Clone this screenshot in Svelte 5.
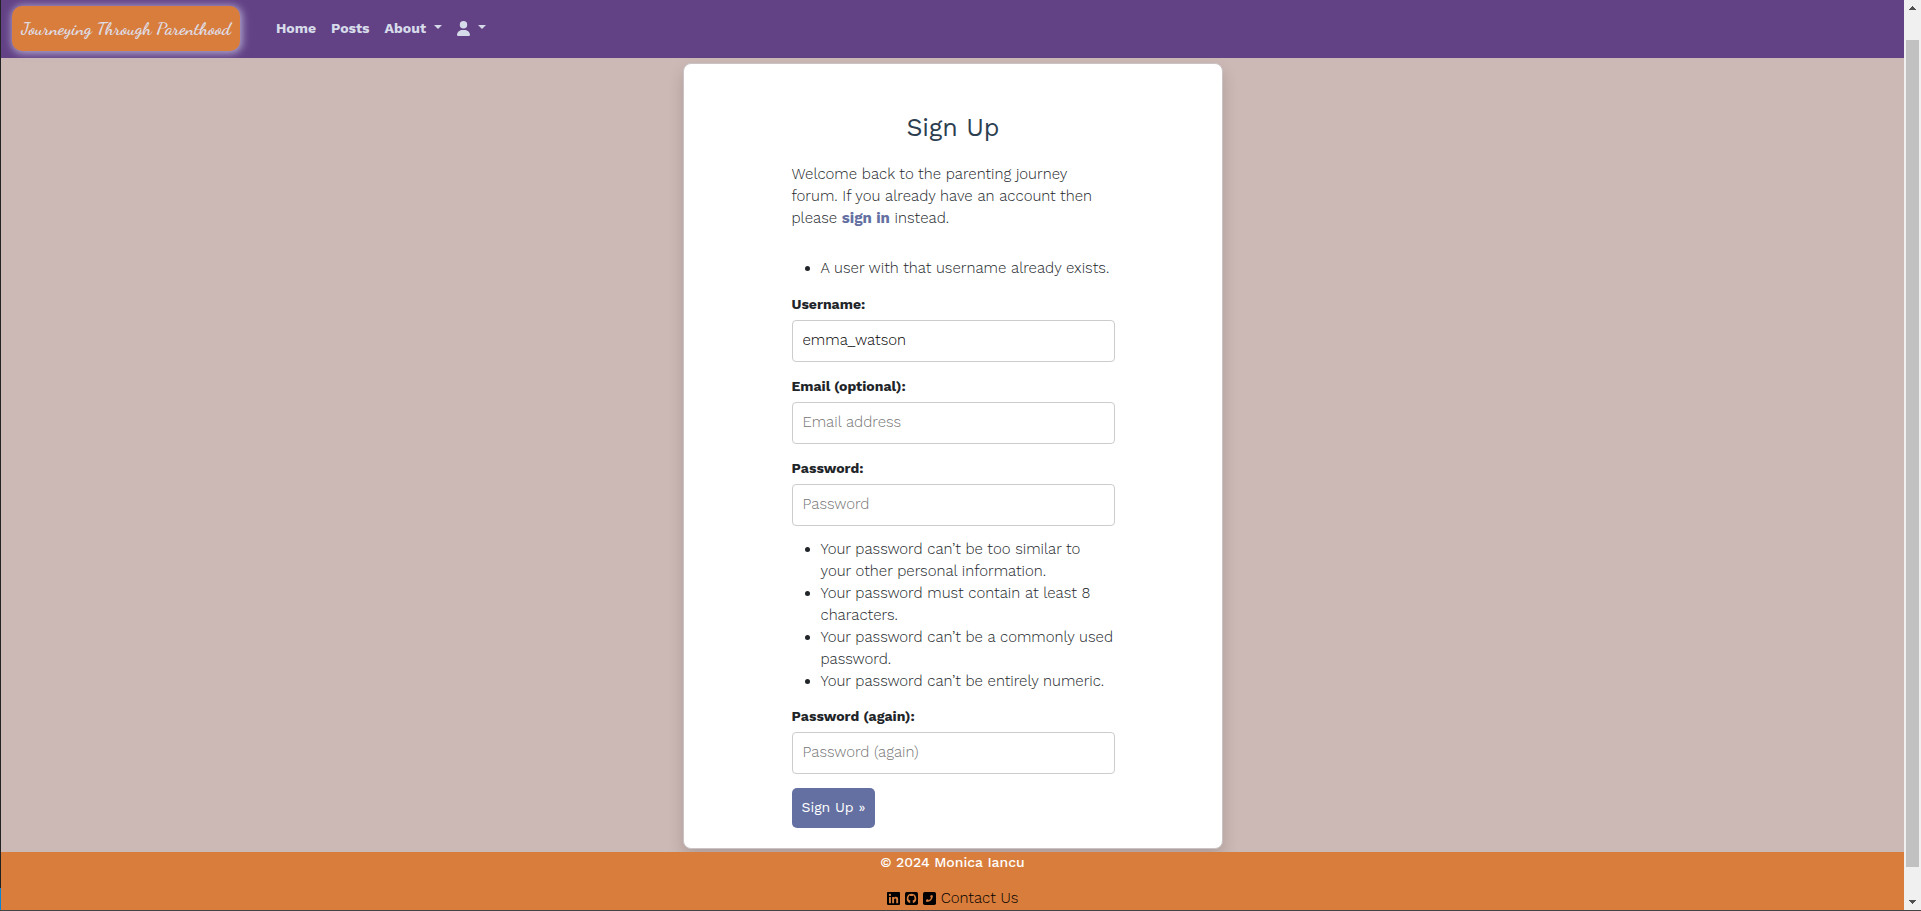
<script>
  const links = ['Home', 'Posts'];
  const errors = ['A user with that username already exists.'];
  const hints = [
    'Your password can’t be too similar to your other personal information.',
    'Your password must contain at least 8 characters.',
    'Your password can’t be a commonly used password.',
    'Your password can’t be entirely numeric.'
  ];
  const fields = [
    { id: 'username', label: 'Username:', type: 'text', value: 'emma_watson', placeholder: 'Username', hints: [] },
    { id: 'email', label: 'Email (optional):', type: 'email', value: '', placeholder: 'Email address', hints: [] },
    { id: 'password1', label: 'Password:', type: 'password', value: '', placeholder: 'Password', hints },
    { id: 'password2', label: 'Password (again):', type: 'password', value: '', placeholder: 'Password (again)', hints: [] }
  ];
</script>

<div class="window">
  <div class="edge"></div>
  <div class="page">
    <header>
      <a class="brand" href="#home">Journeying Through Parenthood</a>
      <nav>
        {#each links as link}
          <a href="#{link}">{link}</a>
        {/each}
        <button type="button">About <span class="caret"></span></button>
        <button type="button" aria-label="Account">
          <svg class="user" viewBox="0 0 448 512"><path d="M224 256A128 128 0 1 0 224 0a128 128 0 1 0 0 256zm-45.7 48C79.8 304 0 383.8 0 482.3C0 498.7 13.3 512 29.7 512H418.3c16.4 0 29.7-13.3 29.7-29.7C448 383.8 368.2 304 269.7 304H178.3z" /></svg>
          <span class="caret"></span>
        </button>
      </nav>
    </header>

    <main>
      <section class="card">
        <h1>Sign Up</h1>
        <p class="intro">
          Welcome back to the parenting journey forum. If you already have an account then please
          <a href="#signin">sign in</a> instead.
        </p>
        <form>
          <ul class="errors">
            {#each errors as error}<li>{error}</li>{/each}
          </ul>
          {#each fields as field}
            <div class="field">
              <label for={field.id}>{field.label}</label>
              <input id={field.id} type={field.type} value={field.value} placeholder={field.placeholder} />
              {#if field.hints.length}
                <ul>
                  {#each field.hints as hint}<li>{hint}</li>{/each}
                </ul>
              {/if}
            </div>
          {/each}
          <button class="submit" type="button">Sign Up »</button>
        </form>
      </section>
    </main>

    <footer>
      <p>© 2024 Monica Iancu</p>
      <div class="contact">
        <a href="#linkedin" aria-label="LinkedIn">
          <svg viewBox="0 32 448 448"><path d="M416 32H31.9C14.3 32 0 46.5 0 64.3v383.4C0 465.5 14.3 480 31.9 480H416c17.6 0 32-14.5 32-32.3V64.3c0-17.8-14.4-32.3-32-32.3zM135.4 416H69V202.2h66.5V416zm-33.2-243c-21.3 0-38.5-17.3-38.5-38.5S80.9 96 102.2 96c21.2 0 38.5 17.3 38.5 38.5 0 21.3-17.2 38.5-38.5 38.5zm282.1 243h-66.4V312c0-24.8-.5-56.7-34.5-56.7-34.6 0-39.9 27-39.9 54.9V416h-66.4V202.2h63.7v29.2h.9c8.9-16.8 30.6-34.5 62.9-34.5 67.2 0 79.7 44.3 79.7 101.9V416z" /></svg>
        </a>
        <a href="#github" aria-label="GitHub">
          <svg viewBox="0 32 448 448">
            <rect y="32" width="448" height="448" rx="60" />
            <path class="cut" d="M224 92a164 164 0 0 0-58 317c9 3 12-4 12-10v-46c0-14 6-24 13-29-45-6-72-26-72-79 0-20 6-34 17-46-3-12-3-29 3-43 17 0 31 9 42 17a156 156 0 0 1 86 0c11-8 25-17 42-17 6 14 6 31 3 43 11 12 17 26 17 46 0 53-27 73-72 79 7 5 13 17 13 32v43c0 6 4 13 13 10A164 164 0 0 0 224 92z" />
          </svg>
        </a>
        <a href="#phone" aria-label="Phone">
          <svg viewBox="0 32 448 448">
            <rect y="32" width="448" height="448" rx="60" />
            <path class="cut" d="M330 150l-49-12c-6-1-11 2-14 7l-20 50c-2 5-1 10 3 13l28 23c-17 36-46 65-82 82l-23-28c-3-4-8-5-13-3l-50 20c-5 3-8 8-7 14l12 49c1 5 6 9 11 9 120 0 213-93 213-213 0-6-4-10-9-11z" />
          </svg>
        </a>
        <a href="#contact">Contact Us</a>
      </div>
    </footer>
  </div>
  <div class="scrollbar" aria-hidden="true">
    <svg viewBox="0 0 7 4"><path d="M3 0h1v1h1v1h1v1h1v1H0V3h1V2h1V1h1z" /></svg>
    <div class="thumb"></div>
    <svg viewBox="0 0 7 4"><path d="M0 0h7v1H6v1H5v1H4v1H3V3H2V2H1V1H0z" /></svg>
  </div>
</div>

<style>
  :global(body) {
    margin: 0;
    font-family: 'Work Sans', Inter, sans-serif;
    font-size: 15px;
    font-weight: 300;
    line-height: 22px;
    color: #212529;
  }
  * {
    box-sizing: border-box;
  }
  a {
    color: inherit;
    text-decoration: none;
  }
  button,
  input {
    font: inherit;
  }
  .window {
    display: grid;
    grid-template-columns: 1px 1fr 17px;
    min-height: 100vh;
    border-bottom: 1px solid #444;
  }
  .edge {
    background: linear-gradient(to top, #0a84d8 22px, #222 22px);
  }
  .page {
    display: flex;
    flex-direction: column;
    background: #ccb8b5;
  }
  header {
    display: flex;
    align-items: center;
    height: 58px;
    padding: 0 11px;
    background: #624185;
  }
  .brand {
    display: flex;
    align-items: center;
    justify-content: center;
    width: 228px;
    height: 45px;
    margin-bottom: 1px;
    padding-bottom: 2px;
    border-radius: 10px;
    background: #d87d3b;
    box-shadow: 1px 1px 8px 1px #b9b0d4;
    color: #dfdde8;
    font: 700 18px 'Dancing Script', 'Liberation Serif', serif;
    white-space: nowrap;
  }
  nav {
    display: flex;
    gap: 15px;
    margin-left: 36px;
    padding-bottom: 2px;
    color: #d6dbea;
    font-weight: 700;
    font-size: 14px;
  }
  nav button {
    display: flex;
    align-items: center;
    gap: 8px;
    padding: 0;
    border: 0;
    background: none;
    color: inherit;
  }
  .caret {
    margin-bottom: 2px;
    border: 4px solid transparent;
    border-top-color: currentColor;
    border-bottom: 0;
  }
  .user {
    width: 13px;
    height: 15px;
    fill: currentColor;
  }
  main {
    flex: 1;
    padding: 5px 16px 3px;
  }
  .card {
    max-width: 540px;
    margin: 0 auto;
    padding: 48px 107px 20px 108px;
    border: 1px solid #c9c3c6;
    border-radius: 8px;
    background: #fff;
    box-shadow: 0 8px 16px rgba(0, 0, 0, 0.15);
  }
  h1 {
    margin: 0 0 19px;
    color: #2c3e50;
    font-size: 25px;
    line-height: 32px;
    font-weight: 400;
    text-align: center;
  }
  .intro {
    margin: 0 0 28px;
  }
  .intro a {
    color: #6470a2;
    font-weight: 700;
  }
  ul {
    margin: 0;
    padding-left: 29px;
  }
  .errors {
    margin-bottom: 14px;
  }
  .field {
    margin-bottom: 13px;
  }
  .field ul {
    margin-top: 12px;
  }
  label {
    display: block;
    margin-bottom: 5px;
    font-weight: 700;
    font-size: 14px;
  }
  input {
    display: block;
    width: 100%;
    height: 42px;
    padding: 0 10px 2px;
    border: 1px solid #ccc;
    border-radius: 4px;
    background: #fff;
    color: #000;
  }
  input::placeholder {
    color: #757575;
  }
  .submit {
    display: block;
    height: 40px;
    margin-top: 14px;
    padding: 0 10px 2px;
    border: 0;
    border-radius: 5px;
    background: #6470a2;
    color: #fff;
    font-weight: 400;
    font-size: 14px;
  }
  footer {
    display: flex;
    flex-direction: column;
    align-items: center;
    gap: 16px;
    height: 58px;
    background: #d87d3b;
    color: #fff;
    line-height: 20px;
  }
  footer p {
    margin: 0;
    font-weight: 500;
    font-size: 14px;
  }
  .contact {
    display: flex;
    align-items: center;
    gap: 5px;
    color: #000;
  }
  .contact svg {
    display: block;
    width: 13px;
    height: 13px;
  }
  .cut {
    fill: #d87d3b;
  }
  .scrollbar {
    display: flex;
    flex-direction: column;
    align-items: center;
    padding: 6px 2px;
    background: #f0f0f0;
  }
  .scrollbar svg {
    width: 7px;
    height: 4px;
    fill: #505050;
  }
  .thumb {
    flex: 1;
    width: 13px;
    margin: 30px 0 33px;
    background: #c1c1c1;
  }
</style>
